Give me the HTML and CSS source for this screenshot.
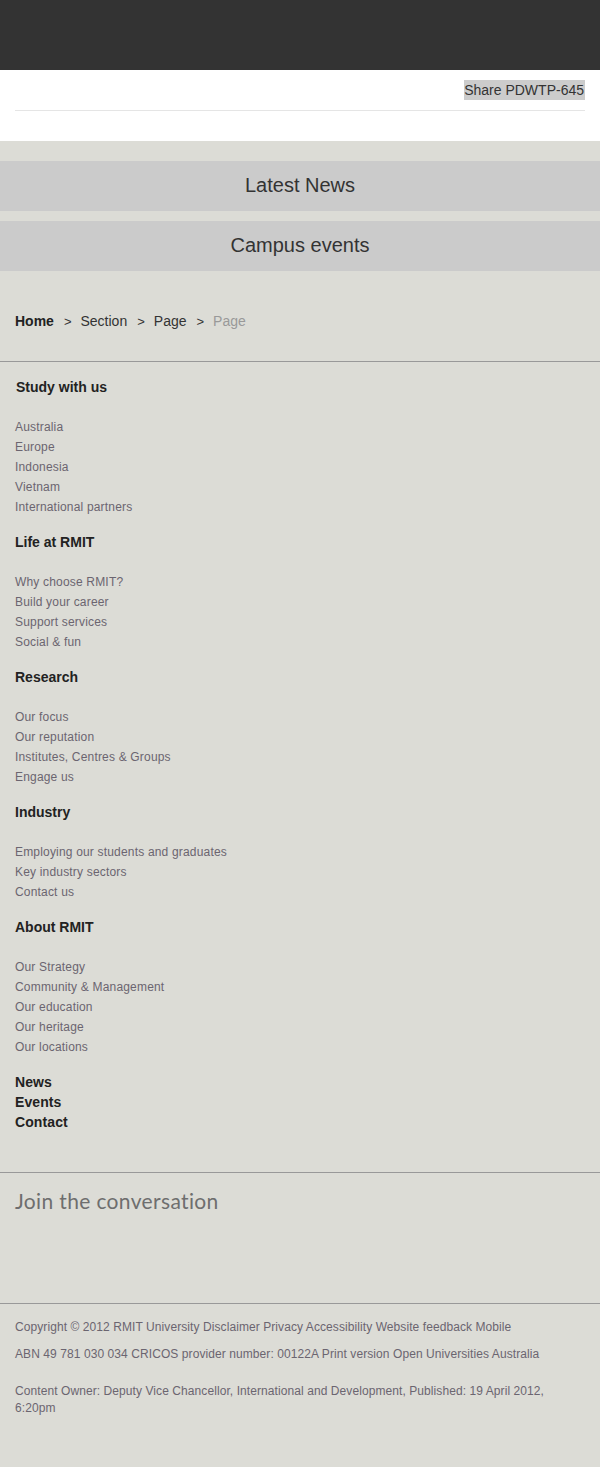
FILE: index.html
```html
<!DOCTYPE html>
<html>
<head>
<meta charset="utf-8">
<link rel="stylesheet" href="styles.css">
</head>
<body>
<header class="topbar"></header>
<div class="share-band">
  <div class="share-row"><span class="share">Share PDWTP-645</span></div>
</div>
<main class="main">
  <div class="bars">
    <div class="bar">Latest News</div>
    <div class="bar">Campus events</div>
  </div>
  <nav class="crumbs">
    <span class="crumb-home">Home</span><span class="sep">&gt;</span><span>Section</span><span class="sep">&gt;</span><span>Page</span><span class="sep">&gt;</span><span class="crumb-current">Page</span>
  </nav>
  <div class="sitemap">
    <section class="group">
      <h3 class="group-title first">Study with us</h3>
      <ul class="links">
        <li>Australia</li><li>Europe</li><li>Indonesia</li><li>Vietnam</li><li>International partners</li>
      </ul>
    </section>
    <section class="group">
      <h3 class="group-title">Life at RMIT</h3>
      <ul class="links">
        <li>Why choose RMIT?</li><li>Build your career</li><li>Support services</li><li>Social &amp; fun</li>
      </ul>
    </section>
    <section class="group">
      <h3 class="group-title">Research</h3>
      <ul class="links">
        <li>Our focus</li><li>Our reputation</li><li>Institutes, Centres &amp; Groups</li><li>Engage us</li>
      </ul>
    </section>
    <section class="group">
      <h3 class="group-title">Industry</h3>
      <ul class="links">
        <li>Employing our students and graduates</li><li>Key industry sectors</li><li>Contact us</li>
      </ul>
    </section>
    <section class="group">
      <h3 class="group-title">About RMIT</h3>
      <ul class="links">
        <li>Our Strategy</li><li>Community &amp; Management</li><li>Our education</li><li>Our heritage</li><li>Our locations</li>
      </ul>
    </section>
    <ul class="main-links">
      <li>News</li><li>Events</li><li>Contact</li>
    </ul>
  </div>
  <section class="conversation">
    <h2 class="conv-title">Join the conversation</h2>
  </section>
  <footer class="footer">
    <p class="foot-line">Copyright © 2012 RMIT University Disclaimer Privacy Accessibility Website feedback Mobile</p>
    <p class="foot-line">ABN 49 781 030 034 CRICOS provider number: 00122A Print version Open Universities Australia</p>
    <p class="foot-line owner">Content Owner: Deputy Vice Chancellor, International and Development, Published: 19 April 2012, 6:20pm</p>
  </footer>
</main>
</body>
</html>
```
FILE: styles.css
```css
* { box-sizing: border-box; }
html, body { margin: 0; padding: 0; }
body {
  font-family: "Liberation Sans", Arial, sans-serif;
  background: #dcdcd6;
  color: #333;
  width: 600px;
  min-height: 1467px;
}
.topbar { height: 70px; background: #333333; }
.share-band {
  background: #ffffff;
  height: 71px;
  padding: 10px 15px 0;
}
.share-row {
  display: flex;
  justify-content: flex-end;
  padding-bottom: 10px;
  border-bottom: 1px solid #e5e5e5;
}
.share {
  background: #cccccc;
  color: #333;
  font-size: 14px;
  line-height: 20px;
  padding: 0 1px 0 0;
}
.main { display: flex; flex-direction: column; }
.bars { display: flex; flex-direction: column; gap: 10px; padding-top: 20px; }
.bar {
  height: 50px;
  padding-bottom: 2px;
  background: #cbcbcb;
  color: #333;
  font-size: 20px;
  display: flex;
  align-items: center;
  justify-content: center;
}
.crumbs {
  height: 91px;
  padding: 40px 15px 0;
  font-size: 14px;
  line-height: 20px;
  color: #333;
  border-bottom: 1px solid #999;
}
.crumb-home { font-weight: bold; color: #222; }
.sep { margin: 0 9px 0 10px; font-size: 13px; line-height: 1; }
.crumb-current { color: #999; }
.sitemap { padding: 15px 15px 40px; border-bottom: 1px solid #999; }
.group { margin-bottom: 15px; }
.group-title {
  margin: 0 0 20px;
  font-size: 14px;
  line-height: 20px;
  font-weight: bold;
  color: #222;
}
.group-title.first { padding-left: 1px; }
.links { list-style: none; margin: 0; padding: 0; }
.links li { font-size: 12px; line-height: 20px; color: #6b6570; letter-spacing: 0.18px; }
.main-links { list-style: none; margin: 0; padding: 0; }
.main-links li { font-size: 14px; line-height: 20px; font-weight: bold; color: #222; letter-spacing: 0.1px; }
.conversation { height: 131px; padding: 16px 15px 0; border-bottom: 1px solid #999; }
.conv-title {
  margin: 0;
  font-family: "Lato", sans-serif;
  font-weight: normal;
  font-size: 21px;
  line-height: 24px;
  color: #6e6e6e;
  letter-spacing: 0.35px;
}
.footer { padding: 15px 15px 40px; }
.foot-line { margin: 0 0 10px; font-size: 12px; line-height: 17px; color: #6b6570; letter-spacing: 0.08px; }
.foot-line.owner { margin-top: 20px; }
```
